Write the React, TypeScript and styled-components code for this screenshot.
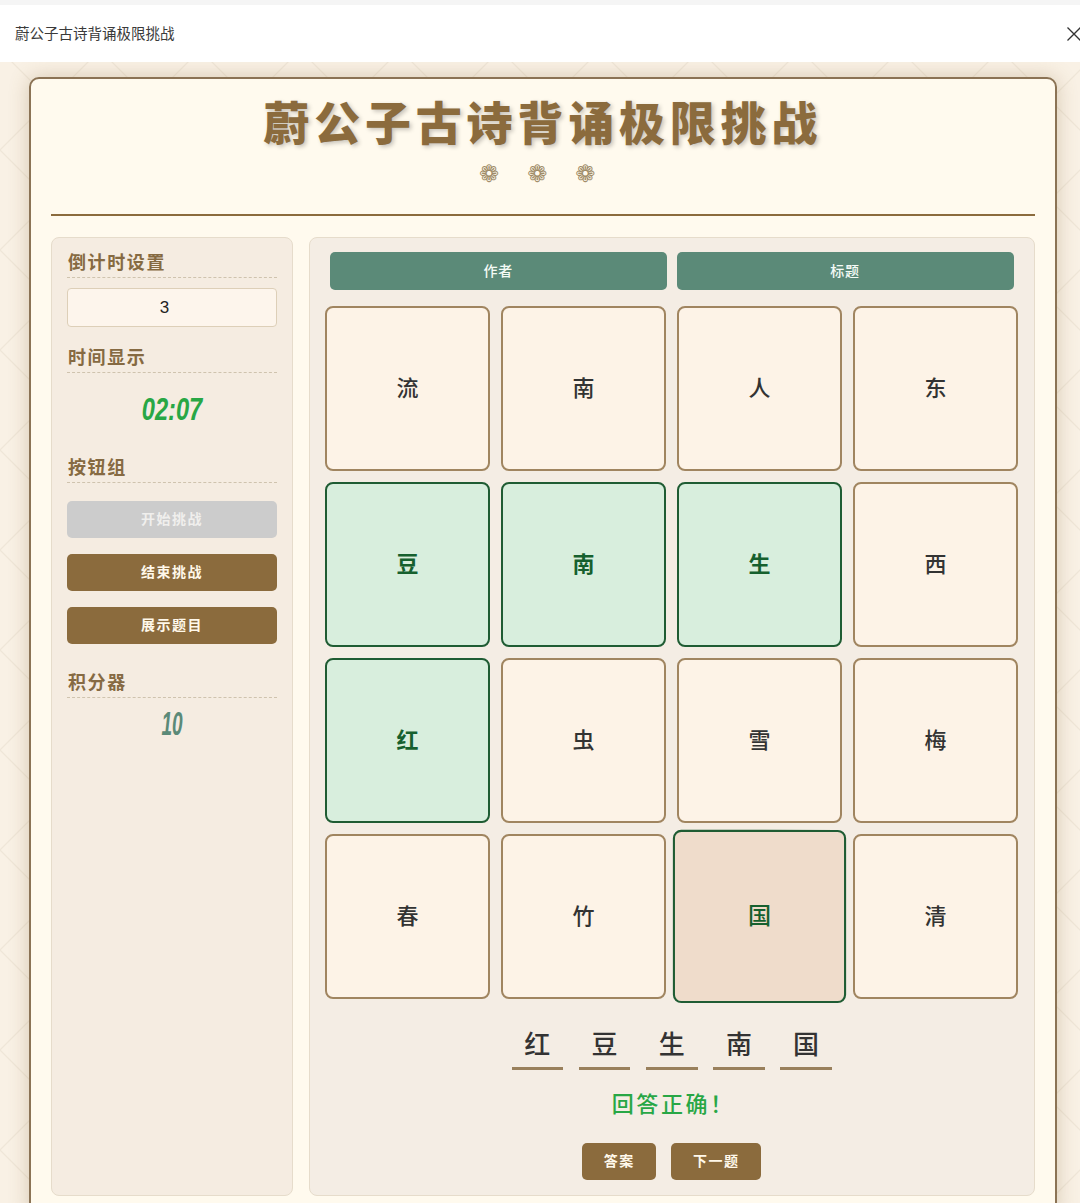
import React from "react";
import styled, { createGlobalStyle } from "styled-components";

const CJK = `"Noto Sans CJK SC", "Noto Sans", sans-serif`;

const tile = encodeURIComponent(
  `<svg xmlns="http://www.w3.org/2000/svg" width="100" height="100"><path d="M0 0 100 100M100 0 0 100" stroke="#efe6d8" stroke-width="1.3" fill="none"/></svg>`
);

const Global = createGlobalStyle`
  html, body { margin: 0; padding: 0; background: #fff; }
  body { width: 1080px; height: 1203px; overflow: hidden; font-family: ${CJK}; }
  * { box-sizing: border-box; }
`;

const Page = styled.div`
  width: 1080px;
  height: 1203px;
  overflow: hidden;
  display: flex;
  flex-direction: column;
`;

const TopStrip = styled.div`
  height: 5px;
  flex: none;
  background: #f5f5f5;
`;

const DialogBar = styled.header`
  height: 57px;
  flex: none;
  background: #fff;
  display: flex;
  align-items: center;
  justify-content: space-between;
  padding: 0 0 2px 15px;
  overflow: hidden;
  font-size: 14.5px;
  color: #3a3a3a;
`;

const CloseIcon = styled.svg`
  width: 16px;
  height: 16px;
  margin-right: -2px;
  margin-top: 3px;
  flex: none;
`;

const Stage = styled.main`
  flex: 1;
  min-height: 0;
  overflow: hidden;
  padding: 15px 0 0 29px;
  background-color: #f9f1e5;
  background-image: url("data:image/svg+xml,${tile}");
  background-position: 0 -12px;
`;

const Card = styled.div`
  width: 1027.5px;
  background: #fffaee;
  border: 2px solid #8b7355;
  border-radius: 10px;
  padding: 20px;
  box-shadow: 0 0 20px rgba(139, 107, 61, 0.3);
`;

const TitleBlock = styled.div`
  text-align: center;
  padding-bottom: 29px;
  border-bottom: 2px solid #8b6b3d;
  margin-bottom: 21px;
`;

const Title = styled.h1`
  margin: 0;
  height: 48px;
  font-size: 46px;
  line-height: 43px;
  font-weight: 900;
  letter-spacing: 4.8px;
  color: #8b6b3d;
  text-shadow: 2px 2px 4px rgba(0, 0, 0, 0.22);
`;

const Flowers = styled.div`
  margin-top: 15px;
  margin-bottom: -1px;
  padding-right: 11px;
  display: flex;
  justify-content: center;
  gap: 28px;
  font-family: "DejaVu Sans", sans-serif;
  font-size: 24px;
  line-height: 24px;
  color: #a08c68;
`;

const Columns = styled.div`
  display: grid;
  grid-template-columns: 242px 1fr;
  gap: 16px;
`;

const Panel = styled.section`
  border: 1px solid #e6dccb;
  border-radius: 8px;
  background: #f5ece1;
`;

const SidePanel = styled(Panel)`
  padding: 15px 15px;
`;

const GamePanel = styled(Panel)`
  padding: 14px 15px 15px;
  background: #f4ede4;
`;

const Group = styled.div<{ $after: number }>`
  margin-bottom: ${(p) => p.$after}px;
`;

const Heading = styled.h3`
  margin: 0;
  height: 25px;
  padding-left: 1px;
  font-size: 18px;
  line-height: 16px;
  font-weight: 700;
  letter-spacing: 1.6px;
  color: #866a42;
  border-bottom: 1px dashed #cfc3ae;
`;

const NumberField = styled.input`
  display: block;
  width: 100%;
  height: 39px;
  margin-top: 10px;
  border: 1px solid #ddcfb8;
  border-radius: 4px;
  background: #fdf5ec;
  text-align: center;
  font-family: "Liberation Sans", sans-serif;
  font-size: 17px;
  color: #222;
  outline: none;
`;

const Timer = styled.div`
  margin-top: 18px;
  height: 36px;
  line-height: 36px;
  text-align: center;
  font-family: "Liberation Sans", sans-serif;
  font-size: 32px;
  font-weight: 700;
  font-style: italic;
  color: #28a745;
  transform: scaleX(0.74);
`;

const Score = styled.div`
  margin-top: 7px;
  height: 36px;
  line-height: 36px;
  text-align: center;
  font-family: "Liberation Sans", sans-serif;
  font-size: 34px;
  font-weight: 700;
  font-style: italic;
  color: #5b8a78;
  transform: scaleX(0.56);
`;

const ButtonStack = styled.div`
  margin-top: 18px;
  display: flex;
  flex-direction: column;
  gap: 16px;
`;

const ActionButton = styled.button<{ $off?: boolean }>`
  height: 37px;
  border: none;
  border-radius: 5px;
  background: ${(p) => (p.$off ? "#cccccc" : "#8b6b3d")};
  color: ${(p) => (p.$off ? "#f0efed" : "#fff8ea")};
  font-family: ${CJK};
  font-size: 14px;
  font-weight: 700;
  letter-spacing: 1.5px;
  padding: 0 0 3px;
`;

const Tabs = styled.div`
  display: grid;
  grid-template-columns: 1fr 1fr;
  gap: 10px;
  padding: 0 5px;
`;

const Tab = styled.button`
  height: 38px;
  border: none;
  border-radius: 5px;
  background: #5b8a78;
  color: #f4fbf6;
  font-family: ${CJK};
  font-size: 14px;
  font-weight: 500;
  letter-spacing: 1px;
  padding: 0 0 2px;
`;

const Board = styled.div`
  margin-top: 16px;
  display: grid;
  grid-template-columns: repeat(4, 165px);
  grid-auto-rows: 165px;
  gap: 11px;
`;

type CellState = "plain" | "right" | "picked";

const Cell = styled.div<{ $state: CellState }>`
  display: flex;
  align-items: center;
  justify-content: center;
  padding-bottom: 5px;
  border-radius: 8px;
  font-size: 22px;
  font-weight: ${(p) => (p.$state === "right" ? 700 : 500)};
  border: 2px solid ${(p) => (p.$state === "plain" ? "#a08560" : "#1f5c33")};
  color: ${(p) => (p.$state === "plain" ? "#333" : "#16602e")};
  background: ${(p) =>
    p.$state === "plain" ? "#fdf3e7" : p.$state === "right" ? "#d8eedd" : "#efdccb"};
  transform: ${(p) => (p.$state === "picked" ? "scale(1.05)" : "none")};
`;

const Slots = styled.div`
  margin-top: 27px;
  display: flex;
  justify-content: center;
  gap: 15.6px;
`;

const Slot = styled.div`
  width: 51.6px;
  height: 44px;
  border-bottom: 3px solid #99805c;
  text-align: center;
  font-size: 26px;
  line-height: 34px;
  font-weight: 500;
  color: #333;
`;

const Feedback = styled.div`
  margin-top: 18px;
  padding-left: 3px;
  height: 30px;
  line-height: 28px;
  text-align: center;
  font-size: 22px;
  font-weight: 500;
  letter-spacing: 2.6px;
  color: #28a745;
`;

const Footer = styled.div`
  margin-top: 25px;
  display: flex;
  justify-content: center;
  gap: 15px;
`;

const FooterButton = styled(ActionButton)<{ $w: number }>`
  width: ${(p) => p.$w}px;
`;

const grid: [string, CellState][] = [
  ["流", "plain"], ["南", "plain"], ["人", "plain"], ["东", "plain"],
  ["豆", "right"], ["南", "right"], ["生", "right"], ["西", "plain"],
  ["红", "right"], ["虫", "plain"], ["雪", "plain"], ["梅", "plain"],
  ["春", "plain"], ["竹", "plain"], ["国", "picked"], ["清", "plain"],
];

export default function App() {
  return (
    <Page>
      <Global />
      <TopStrip />
      <DialogBar>
        <span>蔚公子古诗背诵极限挑战</span>
        <CloseIcon viewBox="0 0 16 16" fill="none" stroke="#333" strokeWidth="1.3">
          <path d="M1.5 1.5 14.5 14.5M14.5 1.5 1.5 14.5" />
        </CloseIcon>
      </DialogBar>
      <Stage>
        <Card>
          <TitleBlock>
            <Title>蔚公子古诗背诵极限挑战</Title>
            <Flowers>
              <span>❁</span>
              <span>❁</span>
              <span>❁</span>
            </Flowers>
          </TitleBlock>
          <Columns>
            <SidePanel>
              <Group $after={21}>
                <Heading>倒计时设置</Heading>
                <NumberField type="number" defaultValue={3} />
              </Group>
              <Group $after={31}>
                <Heading>时间显示</Heading>
                <Timer>02:07</Timer>
              </Group>
              <Group $after={29}>
                <Heading>按钮组</Heading>
                <ButtonStack>
                  <ActionButton $off>开始挑战</ActionButton>
                  <ActionButton>结束挑战</ActionButton>
                  <ActionButton>展示题目</ActionButton>
                </ButtonStack>
              </Group>
              <Group $after={0}>
                <Heading>积分器</Heading>
                <Score>10</Score>
              </Group>
            </SidePanel>
            <GamePanel>
              <Tabs>
                <Tab>作者</Tab>
                <Tab>标题</Tab>
              </Tabs>
              <Board>
                {grid.map(([ch, state], i) => (
                  <Cell key={i} $state={state}>{ch}</Cell>
                ))}
              </Board>
              <Slots>
                {["红", "豆", "生", "南", "国"].map((c) => (
                  <Slot key={c}>{c}</Slot>
                ))}
              </Slots>
              <Feedback>回答正确！</Feedback>
              <Footer>
                <FooterButton $w={74}>答案</FooterButton>
                <FooterButton $w={90}>下一题</FooterButton>
              </Footer>
            </GamePanel>
          </Columns>
        </Card>
      </Stage>
    </Page>
  );
}
